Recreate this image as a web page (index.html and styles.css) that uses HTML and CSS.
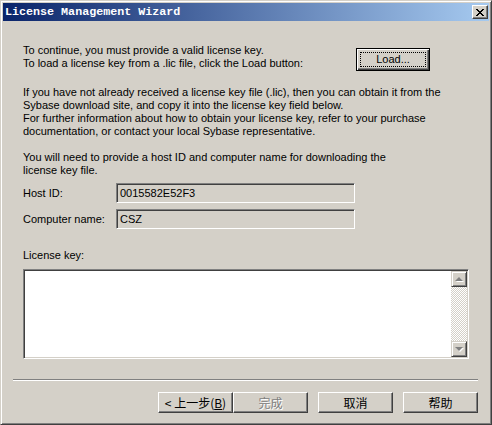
FILE: index.html
```html
<!DOCTYPE html>
<html lang="en">
<head>
    <meta charset="UTF-8">
    <title>License Management Wizard</title>
    <link rel="stylesheet" href="styles.css">
</head>
<body>
    <div class="window">
        <div class="titlebar">
            <span class="title">License Management Wizard</span>
            <button class="close-btn">
                <svg width="8" height="7" viewBox="0 0 8 7" shape-rendering="crispEdges">
                    <path d="M0 0h2v1H0zM6 0h2v1H6zM1 1h2v1H1zM5 1h2v1H5zM2 2h4v1H2zM3 3h2v1H3zM2 4h4v1H2zM1 5h2v1H1zM5 5h2v1H5zM0 6h2v1H0zM6 6h2v1H6z" fill="#000"/>
                </svg>
            </button>
        </div>

        <div class="wizard-body">
            <div class="main">
                <div class="intro">
                    <p class="text">To continue, you must provide a valid license key.<br>To load a license key from a .lic file, click the Load button:</p>
                    <button class="btn btn-default"><span class="focus-rect">Load...</span></button>
                </div>

                <p class="text para-info">If you have not already received a license key file (.lic), then you can obtain it from the<br>Sybase download site, and copy it into the license key field below.<br>For further information about how to obtain your license key, refer to your purchase<br>documentation, or contact your local Sybase representative.</p>

                <p class="text para-host">You will need to provide a host ID and computer name for downloading the<br>license key file.</p>

                <div class="field">
                    <label class="field-label">Host ID:</label>
                    <div class="input">0015582E52F3</div>
                </div>
                <div class="field">
                    <label class="field-label">Computer name:</label>
                    <div class="input">CSZ</div>
                </div>

                <div class="key-label">License key:</div>
                <div class="textarea">
                    <div class="scrollbar">
                        <div class="sb-btn"><span class="arrow-up"></span></div>
                        <div class="sb-track"></div>
                        <div class="sb-btn"><span class="arrow-down"></span></div>
                    </div>
                </div>
            </div>

            <div class="separator"></div>

            <div class="actions">
                <button class="btn btn-cn">&lt; 上一步(<u>B</u>)</button>
                <button class="btn btn-cn btn-disabled">完成</button>
                <button class="btn btn-cn btn-gap">取消</button>
                <button class="btn btn-cn btn-gap">帮助</button>
            </div>
        </div>
    </div>
</body>
</html>
```

FILE: styles.css
```css
* {
    box-sizing: border-box;
}
html, body {
    margin: 0;
    padding: 0;
}
body {
    background: #d4d0c8;
    font-family: "Liberation Sans", Arial, sans-serif;
    font-size: 11px;
    color: #000;
}
.window {
    width: 492px;
    height: 425px;
    background: #d4d0c8;
    border: 1px solid;
    border-color: #d4d0c8 #404040 #404040 #d4d0c8;
    box-shadow: inset 1px 1px #fff, inset -1px -1px #808080;
    padding: 2px;
    display: flex;
    flex-direction: column;
}
.titlebar {
    height: 18px;
    background: linear-gradient(to right, #0a246a, #a6caf0);
    display: flex;
    align-items: center;
    padding: 0 1px 0 2px;
}
.title {
    flex: 1;
    color: #fff;
    font-family: "Liberation Mono", monospace;
    font-weight: bold;
    font-size: 11.7px;
    white-space: nowrap;
}
.close-btn {
    width: 16px;
    height: 14px;
    padding: 0;
    margin: 0;
    background: #d4d0c8;
    border: 1px solid;
    border-color: #fff #404040 #404040 #fff;
    box-shadow: inset -1px -1px #808080;
    display: flex;
    align-items: center;
    justify-content: center;
}
.close-btn svg {
    display: block;
}

.wizard-body {
    flex: 1;
    padding: 0 11px 0 10px;
}
.main {
    padding: 23px 0 0 10px;
}
.text {
    margin: 0;
    line-height: 13px;
    white-space: nowrap;
}
.intro {
    display: grid;
    grid-template-columns: 333px 74px;
    align-items: start;
    height: 27px;
}

.btn {
    font-family: "Liberation Sans", Arial, sans-serif;
    font-size: 11px;
    color: #000;
    background: #d4d0c8;
    margin: 0;
    padding: 0;
    border: 1px solid;
    border-color: #fff #404040 #404040 #fff;
    box-shadow: inset -1px -1px #808080;
    display: flex;
    align-items: center;
    justify-content: center;
}
.btn-default {
    width: 74px;
    height: 23px;
    margin-top: 4px;
    border: 1px solid #000;
    box-shadow: inset 1px 1px #fff, inset -1px -1px #404040, inset -2px -2px #808080;
    padding: 3px;
}
.focus-rect {
    flex: 1;
    align-self: stretch;
    border: 1px dotted #000;
    display: flex;
    align-items: center;
    justify-content: center;
    line-height: 13px;
}

.para-info {
    margin-top: 15px;
}
.para-host {
    margin-top: 13px;
}
.field {
    display: flex;
    align-items: center;
    height: 20px;
    margin-top: 6px;
}
.field-label {
    width: 93px;
    line-height: 13px;
}
.input {
    width: 239px;
    height: 20px;
    border: 1px solid;
    border-color: #808080 #fff #fff #808080;
    box-shadow: inset 1px 1px #404040, inset -1px -1px #d4d0c8;
    padding: 1px 0 0 3px;
    line-height: 16px;
}
.key-label {
    margin-top: 20px;
    line-height: 13px;
}
.textarea {
    margin-top: 7px;
    width: 446px;
    height: 90px;
    background: #fff;
    border: 1px solid;
    border-color: #808080 #fff #fff #808080;
    box-shadow: inset 1px 1px #404040, inset -1px -1px #d4d0c8;
    padding: 1px;
    display: flex;
    justify-content: flex-end;
}
.scrollbar {
    width: 16px;
    display: flex;
    flex-direction: column;
}
.sb-btn {
    height: 16px;
    background: #d4d0c8;
    border: 1px solid;
    border-color: #d4d0c8 #404040 #404040 #d4d0c8;
    box-shadow: inset 1px 1px #fff, inset -1px -1px #808080;
    display: flex;
    align-items: center;
    justify-content: center;
}
.sb-track {
    flex: 1;
    background: repeating-conic-gradient(#d4d0c8 0 25%, #fff 0 50%);
    background-size: 2px 2px;
}
/* disabled scrollbar: grey arrows with a white emboss */
.arrow-up, .arrow-down {
    width: 0;
    height: 0;
    border-left: 4px solid transparent;
    border-right: 4px solid transparent;
    filter: drop-shadow(1px 1px 0 #fff);
}
.arrow-up {
    border-bottom: 4px solid #808080;
    margin-top: -1px;
}
.arrow-down {
    border-top: 4px solid #808080;
}

.separator {
    margin-top: 20px;
    height: 2px;
    border-top: 1px solid #808080;
    border-bottom: 1px solid #fff;
}
.actions {
    margin-top: 11px;
    display: flex;
    justify-content: flex-end;
}
.btn-cn {
    width: 75px;
    height: 21px;
    font-family: "Noto Sans CJK SC", "Liberation Sans", sans-serif;
    font-size: 12px;
    line-height: 14px;
}
.btn-disabled {
    color: #808080;
    text-shadow: 1px 1px #fff;
}
.btn-gap {
    margin-left: 10px;
}
```
